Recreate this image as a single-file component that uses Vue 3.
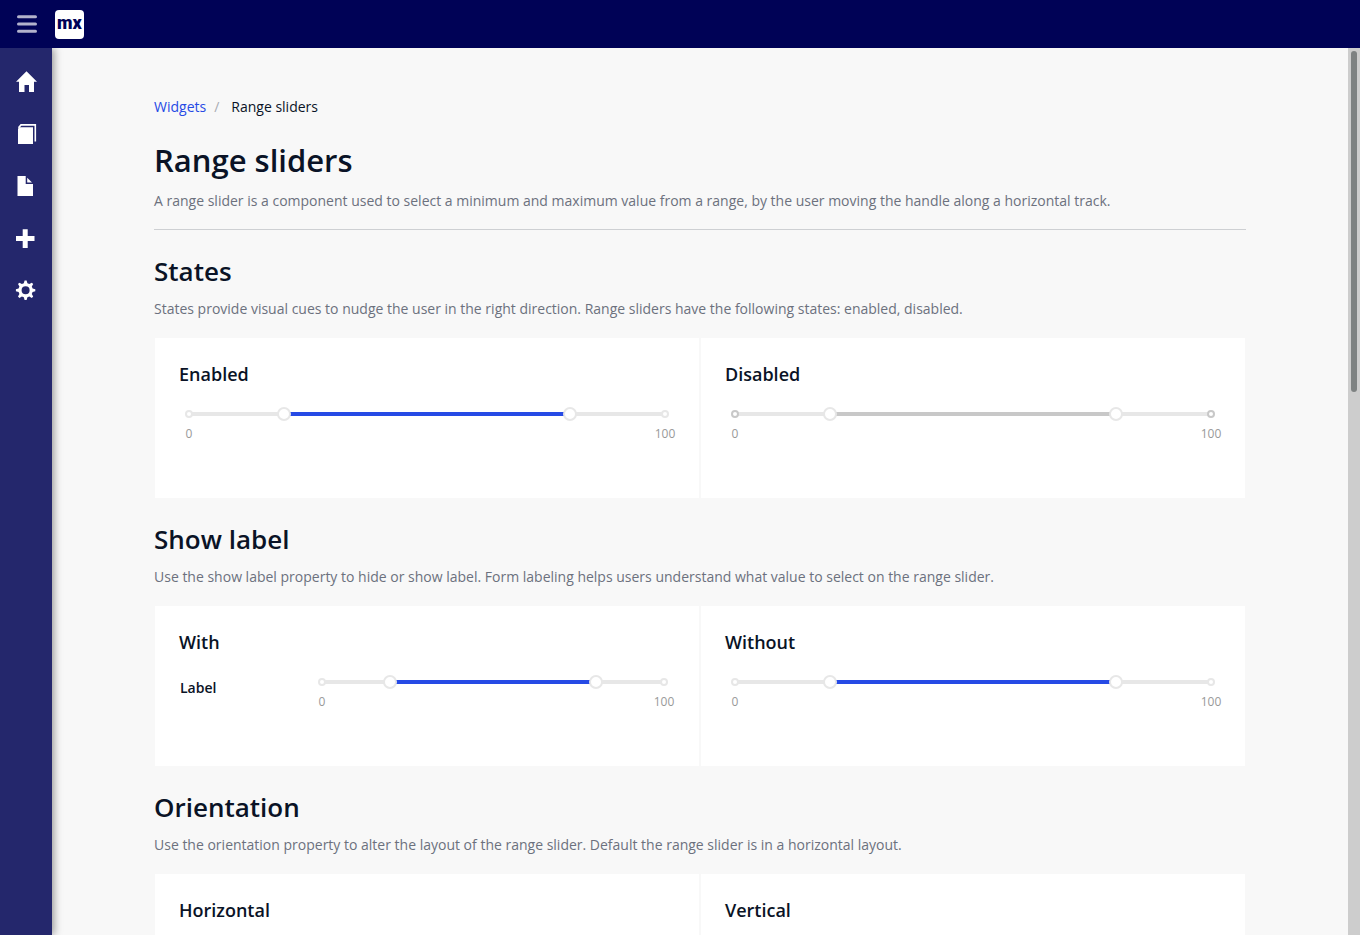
<script setup>
import { reactive } from 'vue'

const navItems = [
  { name: 'Home', icon: 'home' },
  { name: 'Templates', icon: 'copy' },
  { name: 'Pages', icon: 'file' },
  { name: 'Widgets', icon: 'plus' },
  { name: 'Settings', icon: 'cog' },
]

const sections = reactive([
  {
    title: 'States',
    text: 'States provide visual cues to nudge the user in the right direction. Range sliders have the following states: enabled, disabled.',
    cards: [
      { title: 'Enabled', slider: { low: 20, high: 80 } },
      { title: 'Disabled', slider: { low: 20, high: 80, disabled: true } },
    ],
  },
  {
    title: 'Show label',
    text: 'Use the show label property to hide or show label. Form labeling helps users understand what value to select on the range slider.',
    cards: [
      { title: 'With', label: 'Label', slider: { low: 20, high: 80 } },
      { title: 'Without', slider: { low: 20, high: 80 } },
    ],
  },
  {
    title: 'Orientation',
    text: 'Use the orientation property to alter the layout of the range slider. Default the range slider is in a horizontal layout.',
    cards: [{ title: 'Horizontal' }, { title: 'Vertical' }],
  },
])

const fill = (s) => ({ left: s.low + '%', right: 100 - s.high + '%' })
</script>

<template>
  <div class="app">
    <header class="topbar">
      <button class="toggle" type="button" aria-label="Toggle menu">
        <svg width="20" height="18" viewBox="0 0 20 18"><path d="M1.5 1.7h17M1.5 9h17M1.5 16.2h17" stroke="#b2b2cc" stroke-width="3" stroke-linecap="round" /></svg>
      </button>
      <a class="logo" href="#">mx</a>
    </header>

    <div class="body">
      <nav class="sidebar">
        <a v-for="item in navItems" :key="item.name" href="#" :aria-label="item.name">
          <svg width="22" height="22" viewBox="0 0 22 22" fill="#fff">
            <path v-if="item.icon === 'home'" d="M11.500 .3 22 10.800h-3V21h-5v-7H9.500v7H4V10.800H1z" />
            <template v-else-if="item.icon === 'copy'">
              <path d="M3 5.500 4.200 4.300H18V21H3z" />
              <path d="M3.500 4.800 6 1.900H20.300V18.500" fill="none" stroke="#fff" stroke-width="1.600" />
            </template>
            <template v-else-if="item.icon === 'file'">
              <path d="M2.500 1h8.200v8H18v12H2.500z" />
              <path d="M12.200 2.700 17 7.500h-4.800z" />
            </template>
            <path v-else-if="item.icon === 'plus'" d="M7.700 2.300h5v6.800h6.800v5h-6.800v6.800h-5v-6.800H1v-5h6.700z" />
            <path v-else transform="translate(0 1)" fill-rule="evenodd" d="M9.600.6h2l.8 2.700 1.900.8 2.500-1.400 1.400 1.400-1.400 2.500.8 1.900 2.700.8v2l-2.700.8-.8 1.900 1.400 2.500-1.400 1.400-2.500-1.400-1.900.8-.8 2.700h-2l-.8-2.700-1.900-.8-2.500 1.400L3 16.500 4.400 14l-.8-1.900-2.700-.8v-2l2.700-.8.8-1.900L3 4.100l1.400-1.400 2.500 1.400 1.900-.8zM10.600 6.300a4 4 0 1 0 0 8 4 4 0 0 0 0-8z" />
          </svg>
        </a>
      </nav>

      <main class="content">
        <nav class="breadcrumb" aria-label="Breadcrumb">
          <a href="#">Widgets</a><span class="sep">/</span><span>Range sliders</span>
        </nav>
        <div class="intro">
          <h1>Range sliders</h1>
          <p>A range slider is a component used to select a minimum and maximum value from a range, by the user moving the handle along a horizontal track.</p>
        </div>

        <section v-for="section in sections" :key="section.title">
          <h2>{{ section.title }}</h2>
          <p>{{ section.text }}</p>
          <div class="cards">
            <article v-for="card in section.cards" :key="card.title" class="card">
              <h3>{{ card.title }}</h3>
              <div v-if="card.slider" :class="{ labelled: card.label }">
                <label v-if="card.label" for="labelled-low">{{ card.label }}</label>
                <div class="slider" :class="{ disabled: card.slider.disabled }">
                  <div class="rail">
                    <div class="fill" :style="fill(card.slider)"></div>
                    <i class="dot start"></i>
                    <i class="dot end"></i>
                    <input :id="card.label ? 'labelled-low' : undefined" v-model.number="card.slider.low" type="range" min="0" max="100" :disabled="card.slider.disabled" :aria-label="card.title + ' minimum'" />
                    <input v-model.number="card.slider.high" type="range" min="0" max="100" :disabled="card.slider.disabled" :aria-label="card.title + ' maximum'" />
                  </div>
                  <div class="marks"><span>0</span><span>100</span></div>
                </div>
              </div>
            </article>
          </div>
        </section>
      </main>
      <div class="scrollbar"><div class="handle"></div></div>
    </div>
  </div>
</template>

<style>
body {
  margin: 0;
}
</style>

<style scoped>
.app {
  display: flex;
  flex-direction: column;
  height: 100vh;
  font-family: "Open Sans", sans-serif;
  font-size: 14px;
  line-height: 20px;
  color: #0a1326;
  background: #f8f8f8;
}
.topbar {
  flex: none;
  display: flex;
  align-items: center;
  gap: 18px;
  height: 48px;
  padding-left: 17px;
  background: #000256;
  z-index: 2;
}
.toggle {
  display: flex;
  padding: 0;
  border: 0;
  background: none;
}
.logo {
  display: flex;
  align-items: center;
  justify-content: center;
  width: 29px;
  height: 29px;
  padding-bottom: 3px;
  box-sizing: border-box;
  border-radius: 4px;
  background: #fff;
  color: #000256;
  font: 900 18px/20px Roboto, sans-serif;
  text-decoration: none;
}
.body {
  flex: 1;
  display: flex;
  min-height: 0;
}
.sidebar {
  flex: none;
  display: flex;
  flex-direction: column;
  width: 52px;
  padding-top: 8px;
  box-sizing: border-box;
  background: #24276c;
  box-shadow: 2px 0 8px rgba(0, 0, 0, 0.4);
  z-index: 1;
}
.sidebar a {
  display: flex;
  align-items: center;
  justify-content: center;
  height: 52px;
}
.content {
  flex: 1;
  min-width: 0;
  padding: 49px 102px 0;
  overflow: auto;
  scrollbar-width: none;
}
h1, h2, h3, p {
  margin: 0;
}
h1, h2, h3, label {
  font-weight: 600;
}
.breadcrumb a {
  color: #264ae5;
  text-decoration: none;
}
.sep {
  margin: 0 12px 0 8px;
  color: #a9acb3;
}
.intro {
  padding-bottom: 18px;
  margin: 23px 0;
  border-bottom: 1px solid #ced0d3;
}
h1 {
  margin-bottom: 11px;
  font-size: 31px;
  line-height: 40px;
}
h2 {
  margin-bottom: 10px;
  font-size: 26px;
  line-height: 36px;
}
h3 {
  font-size: 18px;
  line-height: 24px;
}
p {
  color: #6c717e;
}
section {
  margin-bottom: 23px;
}
.cards {
  display: grid;
  grid-template-columns: 1fr 1fr;
  gap: 2px;
  margin: 19px 1px 0;
}
.card {
  min-height: 160px;
  box-sizing: border-box;
  padding: 24px;
  background: #fff;
}
.slider {
  padding: 26px 10px 0;
}
.labelled {
  display: grid;
  grid-template-columns: 132px 1fr;
  padding: 0 1px;
}
.labelled label {
  padding-top: 24px;
}
.rail {
  position: relative;
  height: 4px;
  background: #e7e7e7;
}
.fill {
  position: absolute;
  top: 0;
  bottom: 0;
  background: #264ae5;
}
.dot {
  position: absolute;
  top: -2px;
  width: 8px;
  height: 8px;
  box-sizing: border-box;
  border: 2px solid #e7e7e7;
  border-radius: 50%;
  background: #fff;
}
.start {
  left: -4px;
}
.end {
  right: -4px;
}
.disabled .fill {
  background: #c8c8c8;
}
.disabled .dot {
  border-color: #c8c8c8;
}
input {
  position: absolute;
  top: -5px;
  left: -7px;
  width: calc(100% + 14px);
  height: 14px;
  margin: 0;
  appearance: none;
  background: transparent;
  pointer-events: none;
}
input::-webkit-slider-thumb {
  appearance: none;
  width: 14px;
  height: 14px;
  box-sizing: border-box;
  border: 2px solid #e7e7e7;
  border-radius: 50%;
  background: #fff;
  pointer-events: auto;
}
.marks {
  display: flex;
  justify-content: space-between;
  margin: 8px -20px 0;
  color: #999;
  font-size: 12px;
}
.marks span {
  width: 40px;
  text-align: center;
}
.scrollbar {
  flex: none;
  width: 12px;
  padding: 3px;
  box-sizing: border-box;
  background: #cdcdcd;
}
.handle {
  height: 38.7%;
  border-radius: 3px;
  background: #7e8282;
}
</style>
